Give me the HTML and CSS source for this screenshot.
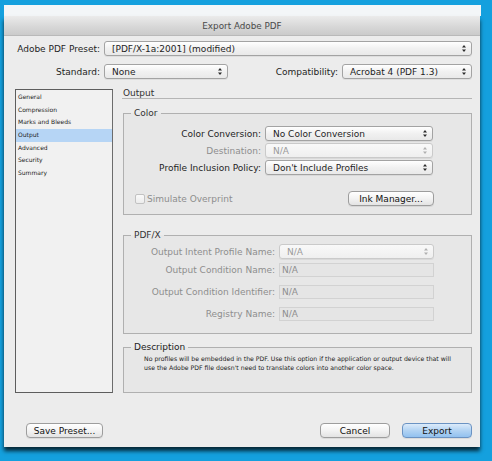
FILE: index.html
```html
<!DOCTYPE html>
<html lang="en">
<head>
    <meta charset="UTF-8">
    <meta name="viewport" content="width=device-width, initial-scale=1.0">
    <title>Export Adobe PDF</title>
    <link rel="stylesheet" href="styles.css">
</head>
<body>
    <div class="screen">
        <div class="backdrop"></div>
        <div class="dialog">
            <div class="titlebar">Export Adobe PDF</div>
            <div class="content">
                <div class="row">
                    <span class="lbl top-lbl">Adobe PDF Preset:</span>
                    <div class="popup grow">
                        <span>[PDF/X-1a:2001] (modified)</span>
                        <svg class="arrows" width="4" height="7" viewBox="0 0 4 7"><path d="M2 0L4 2.6H0Z M2 7L4 4.4H0Z"/></svg>
                    </div>
                </div>
                <div class="row row-second">
                    <span class="lbl top-lbl">Standard:</span>
                    <div class="popup std-popup">
                        <span>None</span>
                        <svg class="arrows" width="4" height="7" viewBox="0 0 4 7"><path d="M2 0L4 2.6H0Z M2 7L4 4.4H0Z"/></svg>
                    </div>
                    <span class="lbl compat-lbl">Compatibility:</span>
                    <div class="popup compat-popup">
                        <span>Acrobat 4 (PDF 1.3)</span>
                        <svg class="arrows" width="4" height="7" viewBox="0 0 4 7"><path d="M2 0L4 2.6H0Z M2 7L4 4.4H0Z"/></svg>
                    </div>
                </div>

                <div class="main">
                    <ul class="sections">
                        <li>General</li>
                        <li>Compression</li>
                        <li>Marks and Bleeds</li>
                        <li class="selected">Output</li>
                        <li>Advanced</li>
                        <li>Security</li>
                        <li>Summary</li>
                    </ul>

                    <div class="panel">
                        <div class="panel-title">Output</div>

                        <fieldset class="group color-group">
                            <legend>Color</legend>
                            <div class="field-row">
                                <span class="lbl color-lbl">Color Conversion:</span>
                                <div class="popup color-popup">
                                    <span>No Color Conversion</span>
                                    <svg class="arrows" width="4" height="7" viewBox="0 0 4 7"><path d="M2 0L4 2.6H0Z M2 7L4 4.4H0Z"/></svg>
                                </div>
                            </div>
                            <div class="field-row">
                                <span class="lbl color-lbl disabled">Destination:</span>
                                <div class="popup color-popup off">
                                    <span>N/A</span>
                                    <svg class="arrows" width="4" height="7" viewBox="0 0 4 7"><path d="M2 0L4 2.6H0Z M2 7L4 4.4H0Z"/></svg>
                                </div>
                            </div>
                            <div class="field-row">
                                <span class="lbl color-lbl">Profile Inclusion Policy:</span>
                                <div class="popup color-popup">
                                    <span>Don't Include Profiles</span>
                                    <svg class="arrows" width="4" height="7" viewBox="0 0 4 7"><path d="M2 0L4 2.6H0Z M2 7L4 4.4H0Z"/></svg>
                                </div>
                            </div>
                            <div class="check-row">
                                <span class="checkbox"></span>
                                <span class="disabled">Simulate Overprint</span>
                                <button type="button" class="btn ink-btn">Ink Manager...</button>
                            </div>
                        </fieldset>

                        <fieldset class="group pdfx-group">
                            <legend class="disabled">PDF/X</legend>
                            <div class="field-row">
                                <span class="lbl pdfx-lbl disabled">Output Intent Profile Name:</span>
                                <div class="popup pdfx-popup off">
                                    <span>N/A</span>
                                    <svg class="arrows" width="4" height="7" viewBox="0 0 4 7"><path d="M2 0L4 2.6H0Z M2 7L4 4.4H0Z"/></svg>
                                </div>
                            </div>
                            <div class="field-row first-text">
                                <span class="lbl pdfx-lbl disabled">Output Condition Name:</span>
                                <div class="textbox">N/A</div>
                            </div>
                            <div class="field-row tall">
                                <span class="lbl pdfx-lbl disabled">Output Condition Identifier:</span>
                                <div class="textbox">N/A</div>
                            </div>
                            <div class="field-row tall">
                                <span class="lbl pdfx-lbl disabled">Registry Name:</span>
                                <div class="textbox">N/A</div>
                            </div>
                        </fieldset>

                        <fieldset class="group desc-group">
                            <legend>Description</legend>
                            <p class="desc">No profiles will be embedded in the PDF. Use this option if the application or output device that will<br>use the Adobe PDF file doesn't need to translate colors into another color space.</p>
                        </fieldset>
                    </div>
                </div>

                <div class="footer">
                    <button type="button" class="btn save-btn">Save Preset...</button>
                    <button type="button" class="btn cancel-btn">Cancel</button>
                    <button type="button" class="btn export-btn">Export</button>
                </div>
            </div>
        </div>
    </div>
</body>
</html>
```

FILE: styles.css
```css
body {
    margin: 0;
    font-family: "DejaVu Sans", "Liberation Sans", sans-serif;
    font-size: 9px;
    color: #1e1e1e;
}
.screen {
    width: 492px;
    height: 461px;
    overflow: hidden;
    background-color: #14a0de;
    padding-top: 5px;
    box-sizing: border-box;
}
.backdrop {
    margin-left: 4px;
    width: 477px;
    height: 11px;
    background-color: #f3f6f8;
}
.dialog {
    margin-left: 4px;
    width: 476px;
    height: 431px;
    background-color: #ececec;
    box-shadow: 0 4px 4px rgba(0, 0, 0, 0.75);
}
.titlebar {
    height: 20px;
    line-height: 20px;
    text-align: center;
    font-size: 8.8px;
    color: #4a4a4a;
    background: linear-gradient(#ebebeb, #d6d6d6 60%, #cbcbcb);
    border-bottom: 1px solid #b9b9b9;
    box-sizing: border-box;
}
.content {
    padding: 5px 8px 0 10px;
}
.row {
    display: flex;
    align-items: center;
    height: 15px;
}
.row-second {
    margin-top: 8px;
}
.lbl {
    text-align: right;
    white-space: nowrap;
    flex-shrink: 0;
}
.top-lbl {
    width: 86px;
    margin-right: 4px;
}
.compat-lbl {
    flex: 1;
    margin-right: 4px;
}
.disabled {
    color: #8e8e8e;
}

/* popup buttons */
.popup {
    display: flex;
    align-items: center;
    justify-content: space-between;
    height: 15px;
    padding: 0 5px 0 7px;
    border: 1px solid #a3a3a3;
    border-radius: 3px;
    background: linear-gradient(#ffffff, #f1f1f1 50%, #e9e9e9);
    box-shadow: 0 1px 0 rgba(0, 0, 0, 0.06);
    box-sizing: border-box;
    white-space: nowrap;
}
.popup .arrows {
    fill: #2a2a2a;
}
.popup.off {
    color: #9a9a9a;
    border-color: #cacaca;
    background: linear-gradient(#f9f9f9, #efefef);
}
.popup.off .arrows {
    fill: #b0b0b0;
}
.grow {
    flex: 1;
}
.std-popup {
    width: 124px;
}
.compat-popup {
    width: 130px;
}

/* main area */
.main {
    display: flex;
    margin-top: 10px;
    height: 304px;
}
.sections {
    list-style: none;
    margin: 0 0 0 1px;
    padding: 1px 0 0;
    width: 98px;
    border: 1px solid #5d5d5d;
    border-right-color: #6c6c6c;
    background-color: #f1f1f1;
    box-sizing: border-box;
    font-size: 6px;
}
.sections li {
    height: 12.7px;
    line-height: 12.7px;
    padding-left: 2px;
    color: #222;
}
.sections li.selected {
    background-color: #b6d5f5;
}
.panel {
    flex: 1;
    display: flex;
    flex-direction: column;
    margin-left: 10px;
}
.panel-title {
    line-height: 9px;
    height: 9px;
    border-bottom: 1px solid #b5b5b5;
    margin-left: -1px;
    padding-left: 1px;
    color: #333;
}

/* group boxes */
.group {
    margin: 0;
    padding: 0;
    min-width: 0;
    border: 1px solid #b0b0b0;
    background-color: rgba(0, 0, 0, 0.018);
}
.group legend {
    margin-left: 7px;
    padding: 0 3px;
    line-height: 12px;
    color: #333;
}
.color-group {
    margin-top: 8px;
    padding: 7px 0 8px;
}
.field-row {
    display: flex;
    align-items: center;
    margin-bottom: 2px;
}
.field-row.first-text {
    margin-top: 4px;
}
.field-row.tall {
    margin-top: 8px;
}
.color-lbl {
    width: 137px;
    margin-right: 4px;
}
.color-popup {
    width: 168px;
}
.check-row {
    display: flex;
    align-items: center;
    margin-top: 16px;
    padding-left: 11px;
}
.checkbox {
    width: 10px;
    height: 10px;
    margin-right: 2px;
    border: 1px solid #c2c2c2;
    border-radius: 2px;
    background: linear-gradient(#fafafa, #ececec);
    box-sizing: border-box;
}
.ink-btn {
    margin-left: auto;
    margin-right: 37px;
    width: 86px;
}
.pdfx-group {
    margin-top: 14px;
    padding: 3px 0 10px;
}
.pdfx-lbl {
    width: 151px;
    margin-right: 4px;
}
.pdfx-popup {
    width: 155px;
}
.textbox {
    width: 155px;
    height: 14px;
    line-height: 12px;
    padding-left: 2px;
    border: 1px solid #d2d2d2;
    background-color: #e5e5e5;
    color: #8e8e8e;
    box-sizing: border-box;
}
.desc-group {
    flex: 1;
    margin-top: 7px;
}
.desc-group legend {
    color: #222;
}
.desc {
    margin: 0;
    padding: 1px 0 0 20px;
    font-size: 6.2px;
    line-height: 9px;
    white-space: nowrap;
    color: #222;
}

/* buttons */
.btn {
    height: 15px;
    padding: 0;
    font-family: "DejaVu Sans", "Liberation Sans", sans-serif;
    font-size: 9px;
    color: #111;
    border: 1px solid #9d9d9d;
    border-radius: 4px;
    background: linear-gradient(#ffffff, #f3f3f3 50%, #e3e3e3);
    box-shadow: 0 1px 0 rgba(0, 0, 0, 0.07);
    box-sizing: border-box;
}
.footer {
    display: flex;
    margin-top: 30px;
}
.save-btn {
    margin-left: 12px;
    width: 77px;
}
.cancel-btn {
    margin-left: auto;
    width: 70px;
}
.export-btn {
    margin-left: 12px;
    width: 70px;
    border-color: #6b93c3;
    background: linear-gradient(#dcebfa, #b2d3f3 50%, #92c1ef);
}
```
